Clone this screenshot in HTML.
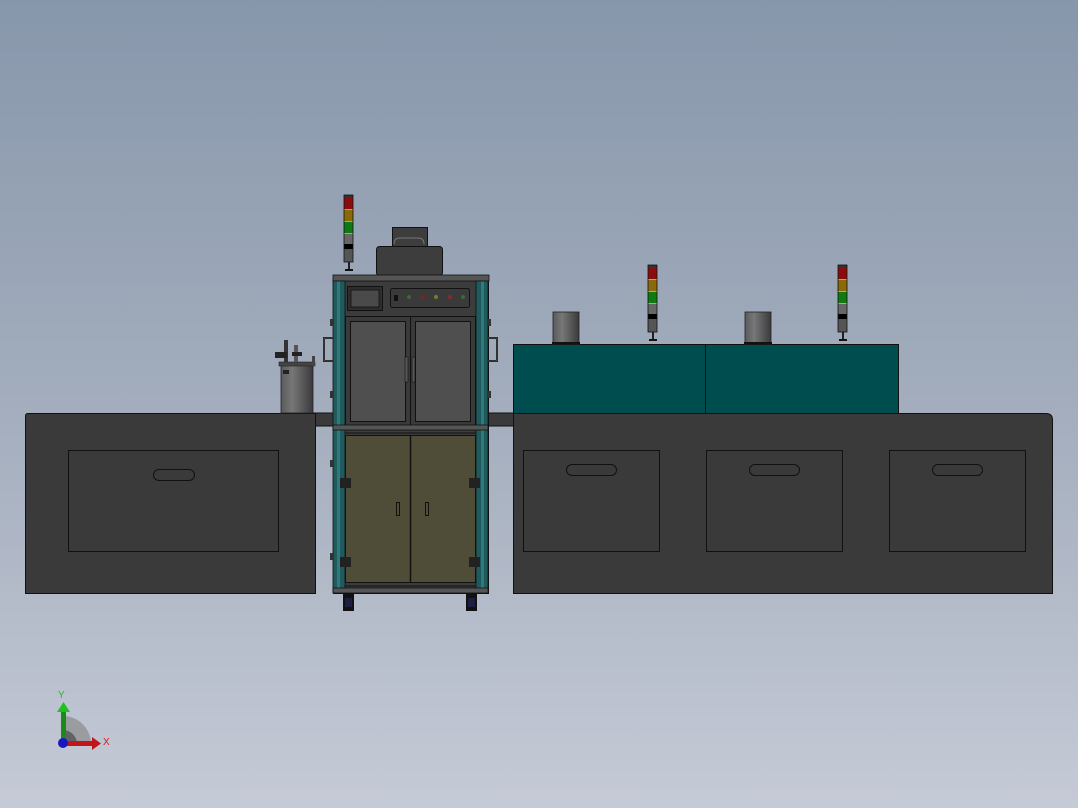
<!DOCTYPE html>
<html><head><style>html,body{margin:0;padding:0;width:1078px;height:808px;overflow:hidden}</style></head>
<body>
<svg width="1078" height="808" viewBox="0 0 1078 808" xmlns="http://www.w3.org/2000/svg" font-family="Liberation Sans, sans-serif">
<defs>
<linearGradient id="bg" x1="0" y1="0" x2="0" y2="1">
<stop offset="0" stop-color="#8797ab"/><stop offset="0.5" stop-color="#a3adbd"/><stop offset="1" stop-color="#c5cad6"/>
</linearGradient>
<linearGradient id="can" x1="0" y1="0" x2="1" y2="0">
<stop offset="0" stop-color="#5a5a5a"/><stop offset="0.35" stop-color="#777"/><stop offset="1" stop-color="#3a3a3e"/>
</linearGradient>
<g id="tower">
<rect x="0" y="0" width="9" height="4" fill="#333"/>
<rect x="0" y="3" width="9" height="11" fill="#8a0c0c"/>
<rect x="0" y="15" width="9" height="11" fill="#8a6a08"/>
<rect x="0" y="27" width="9" height="11" fill="#0f7a12"/>
<rect x="0" y="39" width="9" height="10" fill="#666"/>
<rect x="0" y="49" width="9" height="5" fill="#000"/>
<rect x="0" y="54" width="9" height="13" fill="#555"/>
<rect x="4" y="67" width="2" height="8" fill="#222"/>
<rect x="1" y="74" width="8" height="2" fill="#111"/>
<rect x="0" y="0" width="9" height="67" fill="none" stroke="#111" stroke-width="0.8"/>
</g>
</defs>
<rect width="1078" height="808" fill="url(#bg)"/>

<!-- connecting strips -->
<rect x="313" y="413" width="22" height="13" fill="#3a3a3a" stroke="#111" stroke-width="1"/>
<rect x="486" y="413" width="28" height="13" fill="#3a3a3a" stroke="#111" stroke-width="1"/>

<!-- left base -->
<path d="M25.5 416 Q25.5 413.5 28 413.5 H315.5 V593.5 H25.5 Z" fill="#3a3a3a" stroke="#111"/>
<rect x="68.5" y="450.5" width="210" height="101" fill="#3a3a3a" stroke="#111"/>
<rect x="153.5" y="469.5" width="41" height="11" rx="5.5" fill="#3a3a3a" stroke="#111"/>

<!-- right base -->
<path d="M513.5 413.5 H1046 Q1052.5 413.5 1052.5 420 V593.5 H513.5 Z" fill="#3a3a3a" stroke="#111"/>
<rect x="523.5" y="450.5" width="136" height="101" fill="#3a3a3a" stroke="#111"/>
<rect x="706.5" y="450.5" width="136" height="101" fill="#3a3a3a" stroke="#111"/>
<rect x="889.5" y="450.5" width="136" height="101" fill="#3a3a3a" stroke="#111"/>
<rect x="566.5" y="464.5" width="50" height="11" rx="5.5" fill="#3a3a3a" stroke="#111"/>
<rect x="749.5" y="464.5" width="50" height="11" rx="5.5" fill="#3a3a3a" stroke="#111"/>
<rect x="932.5" y="464.5" width="50" height="11" rx="5.5" fill="#3a3a3a" stroke="#111"/>

<!-- teal boxes -->
<rect x="513.5" y="344.5" width="192" height="69" fill="#004d4f" stroke="#111"/>
<rect x="705.5" y="344.5" width="193" height="69" fill="#004d4f" stroke="#111"/>
<rect x="553" y="312" width="26" height="32" fill="url(#can)" stroke="#222" stroke-width="0.8"/>
<rect x="552" y="342" width="28" height="2" fill="#111"/>
<rect x="745" y="312" width="26" height="32" fill="url(#can)" stroke="#222" stroke-width="0.8"/>
<rect x="744" y="342" width="28" height="2" fill="#111"/>
<use href="#tower" x="648" y="265"/>
<use href="#tower" x="838" y="265"/>

<!-- pot -->
<rect x="281" y="365" width="32" height="48" fill="url(#can)" stroke="#222" stroke-width="0.8"/>
<rect x="279" y="362" width="36" height="4" fill="#444" stroke="#222" stroke-width="0.6"/>
<rect x="284" y="340" width="4" height="22" fill="#333"/>
<rect x="275" y="352" width="12" height="6" fill="#222"/>
<rect x="294" y="345" width="4" height="17" fill="#555"/>
<rect x="292" y="352" width="10" height="4" fill="#222"/>
<rect x="312" y="356" width="3" height="10" fill="#444"/>
<rect x="283" y="370" width="6" height="4" fill="#222"/>

<!-- cabinet -->
<rect x="376.5" y="246.5" width="66" height="29" rx="3" fill="#3d3d3d" stroke="#111"/>
<rect x="392.5" y="227.5" width="35" height="19" fill="#3d3d3d" stroke="#111"/>
<path d="M394 244 Q394 238 400 238 H418 Q424 238 424 244" fill="none" stroke="#777" stroke-width="1"/>
<use href="#tower" x="344" y="195"/>

<rect x="333.5" y="275.5" width="155" height="318" fill="#3c3c3c" stroke="#111"/>
<rect x="333" y="275" width="156" height="6" fill="#555" stroke="#111" stroke-width="0.8"/>
<rect x="333" y="281" width="12" height="311" fill="#1f5a5c"/>
<rect x="337" y="281" width="3" height="311" fill="#2e7a7c"/>
<rect x="476" y="281" width="12" height="311" fill="#1f5a5c"/>
<rect x="481" y="281" width="3" height="311" fill="#2e7a7c"/>
<rect x="333" y="281" width="12" height="311" fill="none" stroke="#111" stroke-width="0.8"/>
<rect x="476" y="281" width="12" height="311" fill="none" stroke="#111" stroke-width="0.8"/>

<rect x="347.5" y="286.5" width="35" height="24" fill="#2e2e2e" stroke="#111"/>
<rect x="351" y="290" width="28" height="17" fill="#4a4a4a" stroke="#111" stroke-width="0.8"/>
<rect x="390.5" y="288.5" width="79" height="19" rx="2" fill="#3a3a3a" stroke="#111"/>
<rect x="394" y="295" width="4" height="6" fill="#111"/>
<circle cx="409" cy="297" r="2" fill="#3a6a3a"/>
<circle cx="423" cy="297" r="2.5" fill="#6a2a2a"/>
<circle cx="436" cy="297" r="2" fill="#7a7a2a"/>
<circle cx="450" cy="297" r="2" fill="#8a2a2a"/>
<circle cx="463" cy="297" r="2" fill="#3a6a3a"/>

<!-- upper doors -->
<rect x="345.5" y="316.5" width="130" height="109" fill="#3a3a3a" stroke="#111"/>
<rect x="350.5" y="321.5" width="55" height="100" fill="#4f4f4f" stroke="#111"/>
<rect x="415.5" y="321.5" width="55" height="100" fill="#4f4f4f" stroke="#111"/>
<line x1="410.5" y1="317" x2="410.5" y2="425" stroke="#111"/>
<rect x="405" y="357" width="3" height="25" fill="#555" stroke="#111" stroke-width="0.6"/>
<rect x="412" y="357" width="3" height="25" fill="#555" stroke="#111" stroke-width="0.6"/>
<path d="M333 338 H324 V361 H333" fill="none" stroke="#111" stroke-width="2"/>
<path d="M333 338 H324 V361 H333" fill="none" stroke="#666" stroke-width="0.8"/>
<path d="M488 338 H497 V361 H488" fill="none" stroke="#111" stroke-width="2"/>
<path d="M488 338 H497 V361 H488" fill="none" stroke="#666" stroke-width="0.8"/>
<rect x="330" y="319" width="3" height="7" fill="#333"/><rect x="330" y="391" width="3" height="7" fill="#333"/>
<rect x="330" y="460" width="3" height="7" fill="#333"/><rect x="330" y="553" width="3" height="7" fill="#333"/>
<rect x="488" y="319" width="3" height="7" fill="#333"/><rect x="488" y="391" width="3" height="7" fill="#333"/>

<!-- lower doors -->
<rect x="333" y="425" width="155" height="5" fill="#555" stroke="#111" stroke-width="0.8"/>
<rect x="345.5" y="435.5" width="130" height="147" fill="#4f4c38" stroke="#111"/>
<line x1="410.5" y1="436" x2="410.5" y2="582" stroke="#111" stroke-width="1.5"/>
<line x1="345" y1="433" x2="476" y2="433" stroke="#111"/>
<line x1="345" y1="586" x2="476" y2="586" stroke="#111"/>
<rect x="396.5" y="502.5" width="3" height="13" fill="none" stroke="#111"/>
<rect x="425.5" y="502.5" width="3" height="13" fill="none" stroke="#111"/>
<rect x="340" y="478" width="11" height="10" fill="#222"/><rect x="469" y="478" width="11" height="10" fill="#222"/>
<rect x="340" y="557" width="11" height="10" fill="#222"/><rect x="469" y="557" width="11" height="10" fill="#222"/>
<rect x="333" y="588" width="155" height="5" fill="#555" stroke="#111" stroke-width="0.8"/>
<!-- feet -->
<rect x="343" y="594" width="11" height="17" fill="#111"/><rect x="345" y="598" width="7" height="9" fill="#1e1e40"/>
<rect x="466" y="594" width="11" height="17" fill="#111"/><rect x="468" y="598" width="7" height="9" fill="#1e1e40"/>

<!-- axis triad -->
<path d="M63 716 A28 28 0 0 1 91 744 H63 Z" fill="#9a9ca0"/>
<path d="M63 730 A14 14 0 0 1 77 744 H63 Z" fill="#606266"/>
<rect x="61" y="710" width="5" height="34" fill="#1a8a1a"/>
<polygon points="57,712 63.5,702 70,712" fill="#20c020"/>
<rect x="63" y="741" width="30" height="5" fill="#c01818"/>
<polygon points="92,737 101,743.5 92,750" fill="#c01818"/>
<circle cx="63" cy="743" r="5" fill="#1818c0"/>
<text x="58" y="698" font-size="10" fill="#20c020">Y</text>
<text x="103" y="745" font-size="10" fill="#e01818">X</text>
</svg>
</body></html>
